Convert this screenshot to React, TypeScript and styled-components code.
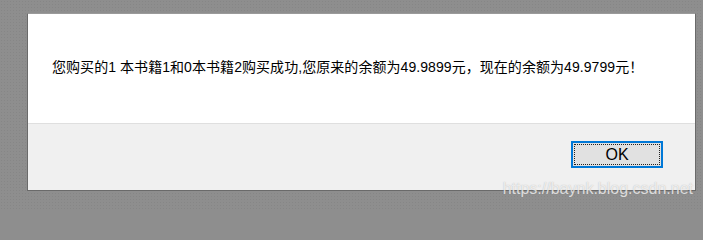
import styled, { createGlobalStyle } from 'styled-components';

const GlobalStyle = createGlobalStyle`
  html, body {
    margin: 0;
    padding: 0;
    background: #8e8e8e;
  }
  body {
    font-family: "Liberation Sans", "Noto Sans CJK SC", sans-serif;
  }
`;

const Backdrop = styled.div`
  position: relative;
  width: 703px;
  height: 209px;
  padding: 13px 0 0 27px;
  box-sizing: border-box;
  background-color: #8e8e8e;
  background-image: radial-gradient(rgba(0, 0, 0, 0.06) 1px, transparent 1px);
  background-size: 3px 3px;
  overflow: hidden;
`;

const Dialog = styled.div`
  width: 669px;
  box-sizing: border-box;
  display: flex;
  flex-direction: column;
  border: 1px solid #6a6a6a;
  border-top-color: #9a9a9a;
  background: #ffffff;
`;

const Message = styled.div`
  padding: 43px 24px 46px;
  font-size: 14px;
  line-height: 20px;
  letter-spacing: 0.06px;
  color: #000000;
  white-space: nowrap;
`;

const Footer = styled.div`
  display: flex;
  justify-content: flex-end;
  height: 67px;
  padding: 17px 32px 0 0;
  box-sizing: border-box;
  border-top: 1px solid #dfdfdf;
  background: #f0f0f0;
`;

const Button = styled.button`
  position: relative;
  width: 92px;
  height: 27px;
  padding: 0;
  border: 2px solid #0078d7;
  background: #e1e1e1;
  font-family: "Liberation Sans", sans-serif;
  font-size: 16px;
  color: #000000;
  cursor: pointer;
  outline: 1px dotted #222222;
  outline-offset: -4px;
`;

const Watermark = styled.span`
  position: absolute;
  right: 10px;
  bottom: 11px;
  font-family: "Liberation Sans", sans-serif;
  font-size: 16px;
  color: rgba(255, 255, 255, 0.72);
  text-shadow: 0 0 1px rgba(120, 120, 120, 0.5);
  pointer-events: none;
`;

export default function App() {
  return (
    <>
      <GlobalStyle />
      <Backdrop>
        <Dialog>
          <Message>
            您购买的1 本书籍1和0本书籍2购买成功,您原来的余额为49.9899元，现在的余额为49.9799元！
          </Message>
          <Footer>
            <Button type="button">OK</Button>
          </Footer>
        </Dialog>
        <Watermark>https://baynk.blog.csdn.net</Watermark>
      </Backdrop>
    </>
  );
}
